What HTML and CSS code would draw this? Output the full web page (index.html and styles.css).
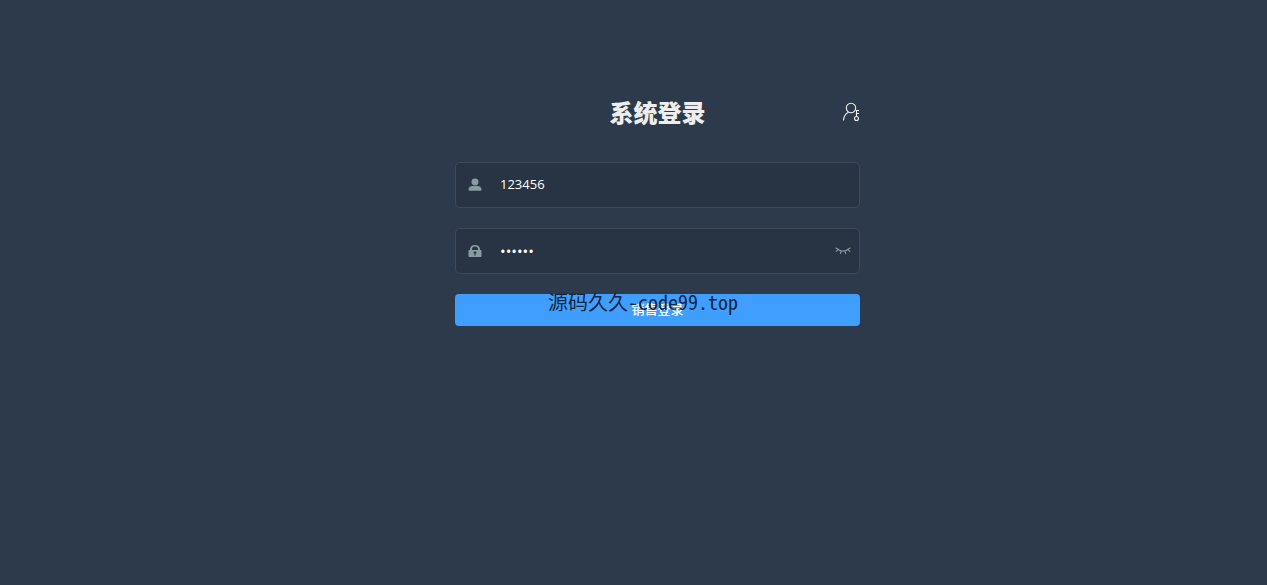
FILE: index.html
```html
<!DOCTYPE html>
<html lang="zh-CN">
<head>
<meta charset="utf-8">
<meta name="viewport" content="width=device-width, initial-scale=1">
<title>系统登录</title>
<link rel="stylesheet" href="styles.css">
</head>
<body>
<main class="login">
  <form class="login-form">
    <header class="login-header">
      <h1 class="title">系统登录</h1>
      <button class="icon-button role-switch" type="button" aria-label="切换身份">
        <svg width="18" height="20" viewBox="0 0 18 20" fill="none" stroke="currentColor" stroke-width="1.1">
          <circle cx="9" cy="6" r="4.7"/>
          <path d="M1.5 18.5C1.7 14.5 3.4 11.8 6.4 10.2"/>
          <circle cx="14.5" cy="16.5" r="2"/>
          <path d="M14.5 14.5V8.5H17M14.5 11.5H17"/>
        </svg>
      </button>
    </header>
    <div class="field">
      <label class="field-icon" for="username" aria-label="用户名">
        <svg width="14" height="14" viewBox="0 0 14 14" fill="currentColor">
          <ellipse cx="7" cy="4" rx="3.5" ry="3.4"/>
          <path d="M0.5 11.6C0.5 9.4 2.2 8 4.2 8H9.8C11.8 8 13.5 9.4 13.5 11.6Q13.5 12.8 12.3 12.8H1.7Q0.5 12.8 0.5 11.6Z"/>
        </svg>
      </label>
      <input class="field-input" id="username" type="text" value="123456">
    </div>
    <div class="field">
      <label class="field-icon" for="password" aria-label="密码">
        <svg width="14" height="14" viewBox="0 0 14 14" fill="currentColor">
          <path fill-rule="evenodd" d="M2 6V5.2C2 2.6 4.2 1 7 1S12 2.6 12 5.2V6H12.8Q13.5 6 13.5 6.8V12.2Q13.5 13 12.7 13H1.3Q.5 13 .5 12.2V6.8Q.5 6 1.2 6ZM4 6H10V5.3C10 3.6 8.8 2.6 7 2.6S4 3.6 4 5.3ZM5.4 8.3Q5.4 9.2 6.4 9.6V11.4H7.6V9.6Q8.6 9.2 8.6 8.3Q8.2 7.5 7 7.5T5.4 8.3Z"/>
        </svg>
      </label>
      <input class="field-input field-input-secret" id="password" type="password" value="123456">
      <button class="icon-button reveal" type="button" aria-label="显示密码">
        <svg width="16" height="10" viewBox="0 0 16 10" fill="none" stroke="currentColor" stroke-width="1.1" stroke-linecap="round">
          <path d="M1 2Q8 8 15 2M3 3.8L1.2 5.4M6 5L5.4 7.5M10 5L10.6 7.5M13 3.8L14.8 5.4"/>
        </svg>
      </button>
    </div>
    <div class="action">
      <button class="submit" type="submit">销售登录</button>
      <div class="watermark">源码久久-code99.top</div>
    </div>
  </form>
</main>
</body>
</html>
```
FILE: styles.css
```css
* {
  box-sizing: border-box;
}

body {
  margin: 0;
  background: #2d3a4b;
  color: #eee;
  font-family: "Open Sans", "Noto Sans CJK SC", sans-serif;
}

.login {
  display: flex;
  justify-content: center;
  min-height: 100vh;
  padding: 96px 0 0 48px;
}

.login-form {
  display: flex;
  flex-direction: column;
  gap: 20px;
  width: 100%;
  max-width: 405px;
}

.login-header {
  display: grid;
  grid-template-columns: 1fr auto 1fr;
  align-items: center;
  margin-bottom: 14px;
}

.title {
  grid-column: 2;
  margin: 0;
  font: 900 24px/32px "Noto Sans CJK SC", sans-serif;
}

.icon-button {
  display: flex;
  padding: 0;
  border: 0;
  background: none;
  color: inherit;
  cursor: pointer;
}

.role-switch {
  justify-self: end;
}

.field {
  display: flex;
  align-items: center;
  height: 46px;
  padding: 0 8px 0 12px;
  border: 1px solid #3e4959;
  border-radius: 5px;
  background: #283443;
  color: #889aa4;
}

.field-icon {
  display: flex;
}

.field-input {
  flex: 1;
  min-width: 0;
  height: 20px;
  margin: 0 0 2px 18px;
  padding: 0;
  border: 0;
  outline: 0;
  background: none;
  color: #fff;
  font: 13px/20px "Open Sans", "Noto Sans CJK SC", sans-serif;
}

.field-input-secret {
  margin-bottom: 0;
  font-size: 15px;
}

.action {
  position: relative;
}

.submit {
  display: block;
  width: 100%;
  height: 32px;
  padding: 0 0 2px;
  border: 0;
  border-radius: 4px;
  background: #409eff;
  color: #fff;
  font: 500 13px/20px "Noto Sans CJK SC", sans-serif;
  cursor: pointer;
}

.watermark {
  position: absolute;
  top: -6px;
  left: 93px;
  color: #10263e;
  font: 20px/28px "Noto Sans Mono CJK SC", "Noto Sans CJK SC", monospace;
  white-space: nowrap;
  pointer-events: none;
}
```
